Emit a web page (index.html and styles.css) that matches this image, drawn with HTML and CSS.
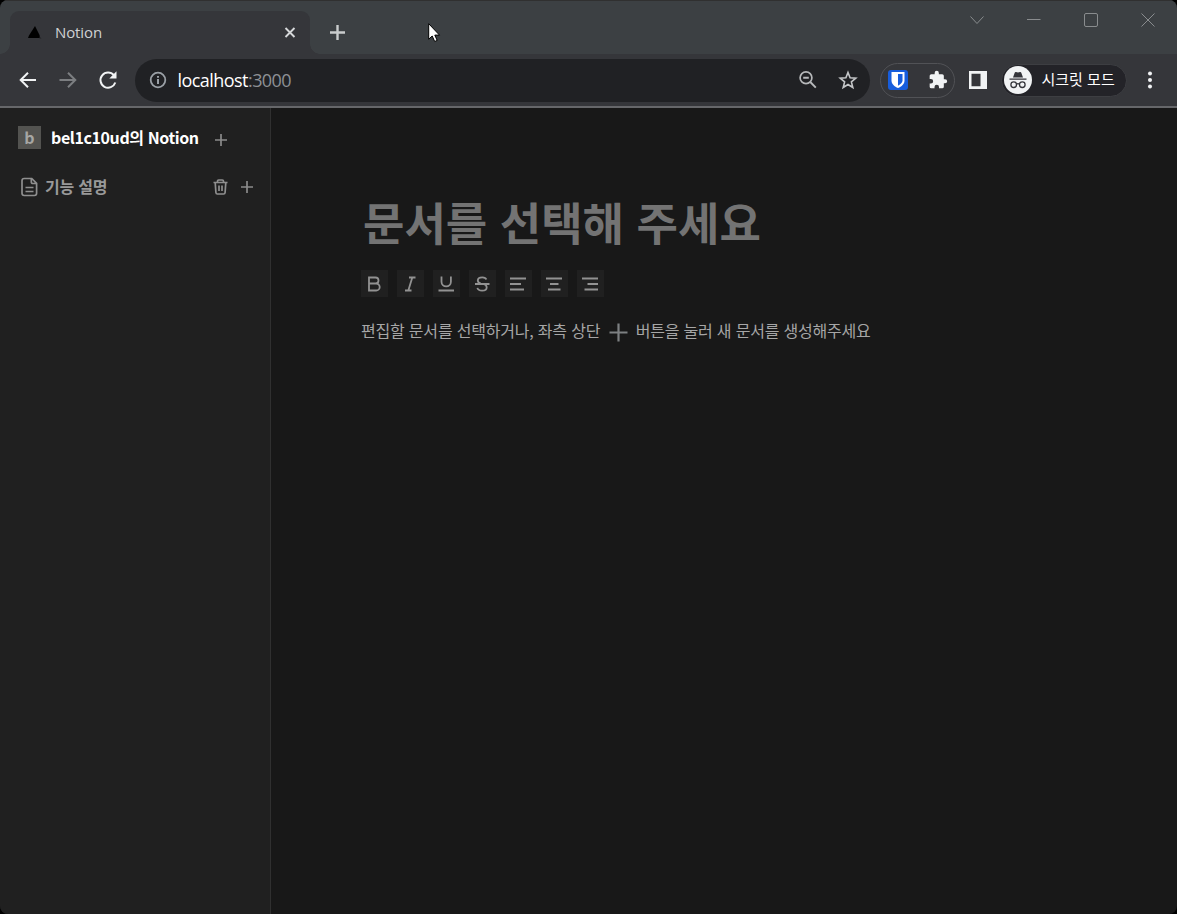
FILE: index.html
```html
<!DOCTYPE html>
<html lang="ko">
<head>
<meta charset="utf-8">
<title>Notion</title>
<link rel="stylesheet" href="styles.css">
</head>
<body>
<div class="window">
  <header class="tabstrip">
    <div class="tab">
      <svg class="favicon" width="14" height="13" viewBox="0 0 14 13"><path d="M7 0l4.500 9 .5 3H0l1-2.500z" fill="#000"/><path d="M11.500 10.500l2 2h-2z" fill="#202124"/></svg>
      <span class="tab-title">Notion</span>
      <svg class="tab-close" width="12" height="12" viewBox="0 0 12 12"><path d="M1.500 1l9 9m0-9l-9 9" stroke="#d6d8da" stroke-width="1.900"/></svg>
    </div>
    <svg class="new-tab" width="16" height="16" viewBox="0 0 16 16"><path d="M7.500 1v15M0 8.500h15" stroke="#c9cccd" stroke-width="2.400"/></svg>
    <div class="controls">
      <svg width="14" height="14" viewBox="0 0 14 14"><path d="M.5 3.500L7 10.500l6.500-7"/></svg>
      <svg width="14" height="14" viewBox="0 0 14 14"><path d="M0 6.500h13.500"/></svg>
      <svg width="14" height="14" viewBox="0 0 14 14"><rect x=".5" y=".5" width="13" height="13" rx="1.5"/></svg>
      <svg width="14" height="14" viewBox="0 0 14 14"><path d="M.5.5l13 13m0-13l-13 13"/></svg>
    </div>
  </header>

  <div class="toolbar">
    <div class="nav">
      <svg width="20" height="20" viewBox="0 0 20 20"><path d="M18 10H3M10 2.700L2.700 10l7.300 7.300" stroke="#f1f3f4" stroke-width="2" fill="none"/></svg>
      <svg width="20" height="20" viewBox="0 0 20 20"><path d="M1.500 10H17M10 2.700l7.300 7.300-7.300 7.300" stroke="#7c7e81" stroke-width="2" fill="none"/></svg>
      <svg width="20" height="20" viewBox="0 0 20 20"><path d="M15.900 5.200A7.600 7.600 0 1 0 17.300 12.500" stroke="#f1f3f4" stroke-width="2" fill="none"/><path d="M18.500 1.300v7.200h-7.200z" fill="#f1f3f4"/></svg>
    </div>
    <div class="omnibox">
      <svg width="18" height="18" viewBox="0 0 18 18"><circle cx="9" cy="9" r="7.300" fill="none" stroke="#9aa0a6" stroke-width="1.800"/><path d="M9 8v5M9 5v1.800" stroke="#9aa0a6" stroke-width="2"/></svg>
      <span class="url">localhost<span class="port">:3000</span></span>
      <svg class="zoom" width="20" height="20" viewBox="0 0 20 20"><circle cx="8" cy="7.700" r="5.900" fill="none" stroke="#b6b8ba" stroke-width="1.700"/><path d="M5.200 7.700h5.600M12.300 12l5.500 5.700" stroke="#b6b8ba" stroke-width="1.900"/></svg>
      <svg width="20" height="20" viewBox="0 0 20 20"><path d="M10 2.500l2.100 5.300 5.700.4-4.400 3.700 1.400 5.600-4.800-3-4.800 3 1.400-5.600L2.200 8.200l5.700-.4z" fill="none" stroke="#c4c6c8" stroke-width="1.600"/></svg>
    </div>
    <div class="extensions">
      <svg width="20" height="20" viewBox="0 0 20 20"><rect width="20" height="20" rx="3" fill="#175ddc"/><path d="M3.500 2h13v8.500c0 3.500-3 6-6.500 7.500-3.500-1.500-6.500-4-6.500-7.500z" fill="#fff"/><path d="M10 4h4.500v6.500c0 2-1.800 3.800-4.500 5.200z" fill="#175ddc"/></svg>
      <svg width="20" height="20" viewBox="0 0 24 24"><path d="M20.500 11H19V7a2 2 0 0 0-2-2h-4V3.500a2.500 2.500 0 0 0-5 0V5H4a2 2 0 0 0-2 2v3.800h1.500a2.700 2.700 0 0 1 0 5.400H2V20a2 2 0 0 0 2 2h3.800v-1.500a2.700 2.700 0 0 1 5.400 0V22H17a2 2 0 0 0 2-2v-4h1.500a2.500 2.500 0 0 0 0-5z" fill="#f1f3f4"/></svg>
    </div>
    <svg class="side-panel" width="18" height="18" viewBox="0 0 18 18"><path fill-rule="evenodd" d="M0 0h18v18H0zM2.500 2.700h9v12.600h-9z" fill="#f1f3f4"/></svg>
    <div class="incognito">
      <svg width="28" height="28" viewBox="0 0 28 28"><circle cx="14" cy="14" r="14" fill="#f1f3f4"/><path d="M9 11.500l1.700-4.700q.3-1 1.300-.8l2 .6 2-.6q1-.2 1.300.8L19 11.500zM5.500 12.500h17v1.300h-17z" fill="#34353a"/><g fill="none" stroke="#34353a" stroke-width="1.300"><circle cx="9.700" cy="18.700" r="2.800"/><circle cx="18.300" cy="18.700" r="2.800"/><path d="M12.500 18.200q1.500-1 3 0"/></g></svg>
      <span>시크릿 모드</span>
    </div>
    <svg class="more" width="6" height="18" viewBox="0 0 6 18"><g fill="#f1f3f4"><circle cx="3" cy="2.500" r="2"/><circle cx="3" cy="9" r="2"/><circle cx="3" cy="15.500" r="2"/></g></svg>
  </div>

  <main class="app">
    <aside class="sidebar">
      <div class="workspace">
        <span class="avatar">b</span>
        <span class="workspace-name">bel1c10ud의 Notion</span>
        <svg class="add" width="12" height="12" viewBox="0 0 12 12"><path d="M6 0v12M0 6h12"/></svg>
      </div>
      <div class="doc-row">
        <svg class="line-icon" width="17" height="20" viewBox="0 0 17 20"><path d="M3.200 1.500h7.600l4.800 4.800v10q0 2.200-2.200 2.200H3.200Q1 18.500 1 16.300V3.700q0-2.200 2.200-2.200zM10.300 1.700v3.200q0 1.600 1.600 1.600h3.400M4.500 10.500h8M4.500 14.500h8"/></svg>
        <span class="doc-name">기능 설명</span>
        <svg class="line-icon trash" width="15" height="16" viewBox="0 0 15 16"><path d="M.5 3.500h14M4.500 3.500v-1.300q0-1.200 1.200-1.200h3.600q1.200 0 1.200 1.200v1.300M2.200 3.500l.7 10q.1 1.500 1.500 1.500h6.200q1.400 0 1.500-1.500l.7-10M6 6.500v5.500M9 6.500v5.500"/></svg>
        <svg class="add" width="12" height="12" viewBox="0 0 12 12"><path d="M6 0v12M0 6h12"/></svg>
      </div>
    </aside>
    <section class="editor">
      <h1 class="title">문서를 선택해 주세요</h1>
      <div class="format-bar">
        <span class="format"><svg width="27" height="27" viewBox="0 0 27 27"><path d="M8 7.500h6.500a3 3 0 0 1 0 6H8zM8 13.500h7.200a3.500 3.500 0 0 1 0 7H8z"/></svg></span>
        <span class="format"><svg width="27" height="27" viewBox="0 0 27 27"><path d="M12 7.500h6.500M8 20.500h6.500M15.300 7.500l-4 13"/></svg></span>
        <span class="format"><svg width="27" height="27" viewBox="0 0 27 27"><path d="M8.500 6.500v5.200a4.700 4.700 0 0 0 9.400 0V6.500M5.500 20.500h15.500"/></svg></span>
        <span class="format"><svg width="27" height="27" viewBox="0 0 27 27"><path d="M17.300 9.500c-.4-1.300-1.900-2.200-4-2.200-2.800 0-4.500 1.300-4.500 3.100 0 1.500 1 2.500 3 3.100M6 14h14.500M14.500 14c2 .6 3.200 1.600 3.200 3.200 0 2.100-1.700 3.500-4.600 3.500-2.500 0-4.300-1.100-4.700-2.800"/></svg></span>
        <span class="format"><svg width="27" height="27" viewBox="0 0 27 27"><path d="M5 8.500h16M5 14h11M5 19.500h14"/></svg></span>
        <span class="format"><svg width="27" height="27" viewBox="0 0 27 27"><path d="M5 8.500h16M9 14h8.500M7 19.500h12.500"/></svg></span>
        <span class="format"><svg width="27" height="27" viewBox="0 0 27 27"><path d="M5 8.500h16M10.500 14h10.500M7.500 19.500H21"/></svg></span>
      </div>
      <div class="hint">
        <span>편집할 문서를 선택하거나, 좌측 상단</span>
        <svg width="19" height="19" viewBox="0 0 19 19"><path d="M9.500.5v18M.5 9.500h18" stroke="#7d8082" stroke-width="2.200"/></svg>
        <span>버튼을 눌러 새 문서를 생성해주세요</span>
      </div>
    </section>
  </main>
  <svg class="cursor" width="13" height="20" viewBox="0 0 13 20"><path d="M.7.700v15.500l3.500-3.200 2.500 5.500 2.500-1.100-2.400-5.300h4.700z" fill="#fff" stroke="#000"/></svg>
</div>
</body>
</html>
```

FILE: styles.css
```css
* { box-sizing: border-box; }

body {
  margin: 0;
  background: #000;
  font-family: "Noto Sans CJK KR", sans-serif;
}

svg { display: block; flex: none; }

.window {
  position: relative;
  display: flex;
  flex-direction: column;
  width: 1177px;
  height: 914px;
  overflow: hidden;
  border-radius: 8px;
  background: #181818;
}

.tabstrip {
  display: flex;
  height: 54px;
  flex: none;
  background: #3c4043;
  border-top: 1px solid #303030;
}

.tab {
  position: relative;
  display: flex;
  align-items: center;
  width: 300px;
  height: 43px;
  margin: 10px 0 0 10px;
  padding: 0 14px 0 18px;
  border-radius: 9px 9px 0 0;
  background: #35363a;
}

.tab::before,
.tab::after {
  content: "";
  position: absolute;
  bottom: 0;
  width: 10px;
  height: 10px;
}

.tab::before {
  left: -10px;
  background: radial-gradient(circle at 0 0, transparent 9.5px, #35363a 10px);
}

.tab::after {
  right: -10px;
  background: radial-gradient(circle at 100% 0, transparent 9.5px, #35363a 10px);
}

.tab-title {
  margin: 0 0 2px 13px;
  color: #d0d1d3;
  font: 15px/20px "Open Sans", sans-serif;
  letter-spacing: -0.1px;
}

.tab-close { margin-left: auto; }
.new-tab { margin: 23px 0 0 20px; }

.controls {
  display: flex;
  gap: 43px;
  margin: 12px 22px 0 auto;
  fill: none;
  stroke: #898c8e;
}

.toolbar {
  display: flex;
  align-items: center;
  height: 54px;
  flex: none;
  background: #35363a;
  border-bottom: 2px solid #66676a;
}

.nav {
  display: flex;
  gap: 20px;
  margin-left: 17.5px;
}

.omnibox {
  display: flex;
  align-items: center;
  width: 735px;
  height: 43px;
  margin-left: 17.5px;
  padding: 0 12.5px 0 13.5px;
  border-radius: 22px;
  background: #202124;
}

.url {
  margin-left: 11px;
  color: #fff;
  font: 18px/24px "Open Sans", sans-serif;
  letter-spacing: -0.55px;
}

.port { color: #8d9095; }
.zoom { margin: 0 20px 0 auto; }

.extensions {
  display: flex;
  align-items: center;
  gap: 20px;
  width: 75px;
  height: 35px;
  margin-left: 10px;
  padding-left: 6.5px;
  border: 1px solid #515256;
  border-radius: 18px;
}

.side-panel { margin-left: 13.5px; }

.incognito {
  display: flex;
  align-items: center;
  width: 126px;
  height: 33px;
  margin-left: 14.5px;
  padding-left: 1.5px;
  border: 1px solid #3d3e42;
  border-radius: 17px;
  background: #232328;
  color: #fff;
  font-size: 15px;
  line-height: 20px;
}

.incognito span { margin: 0 0 2px 10px; white-space: nowrap; }
.more { margin-left: 20px; }

.app { display: flex; flex: 1; }

.sidebar {
  width: 271px;
  padding: 17px 17px 0 18px;
  background: #202020;
  border-right: 1px solid #303030;
}

.workspace,
.doc-row {
  display: flex;
  align-items: center;
  height: 26px;
  font-size: 16px;
  line-height: 24px;
}

.avatar {
  width: 23px;
  height: 23px;
  margin-bottom: 2px;
  background: #535350;
  color: #a6a6a3;
  font-weight: 700;
  line-height: 23px;
  text-align: center;
}

.workspace-name {
  margin: 0 0 2px 10px;
  color: #fff;
  font-weight: 700;
  letter-spacing: -0.4px;
}

.workspace .add { margin: 4px 0 0 16px; }

.doc-row {
  margin-top: 23px;
  padding-left: 3px;
}

.doc-name {
  margin: 0 0 2px 7px;
  color: #999;
  font-weight: 700;
  letter-spacing: -0.2px;
}

.add {
  fill: none;
  stroke: #8b8b8b;
  stroke-width: 1.7;
}

.line-icon {
  fill: none;
  stroke: #8f8f8f;
  stroke-width: 1.7;
}

.trash { margin: 0 13.5px 0 auto; }

.editor { padding: 81px 0 0 90px; }

.title {
  margin: 0;
  padding-left: 2px;
  color: #737373;
  font-size: 45px;
  font-weight: 700;
  line-height: 66px;
}

.format-bar {
  display: flex;
  gap: 9px;
  margin-top: 15px;
}

.format {
  width: 27px;
  height: 27px;
  background: #202020;
  fill: none;
  stroke: #929292;
  stroke-width: 1.8;
}

.hint {
  display: flex;
  align-items: center;
  margin-top: 21px;
  color: #a6a6a6;
  font-size: 16px;
  line-height: 24px;
  letter-spacing: -0.2px;
}

.hint svg { margin: 5px 8px 0 8.5px; }

.cursor {
  position: absolute;
  left: 428px;
  top: 23px;
}
```
